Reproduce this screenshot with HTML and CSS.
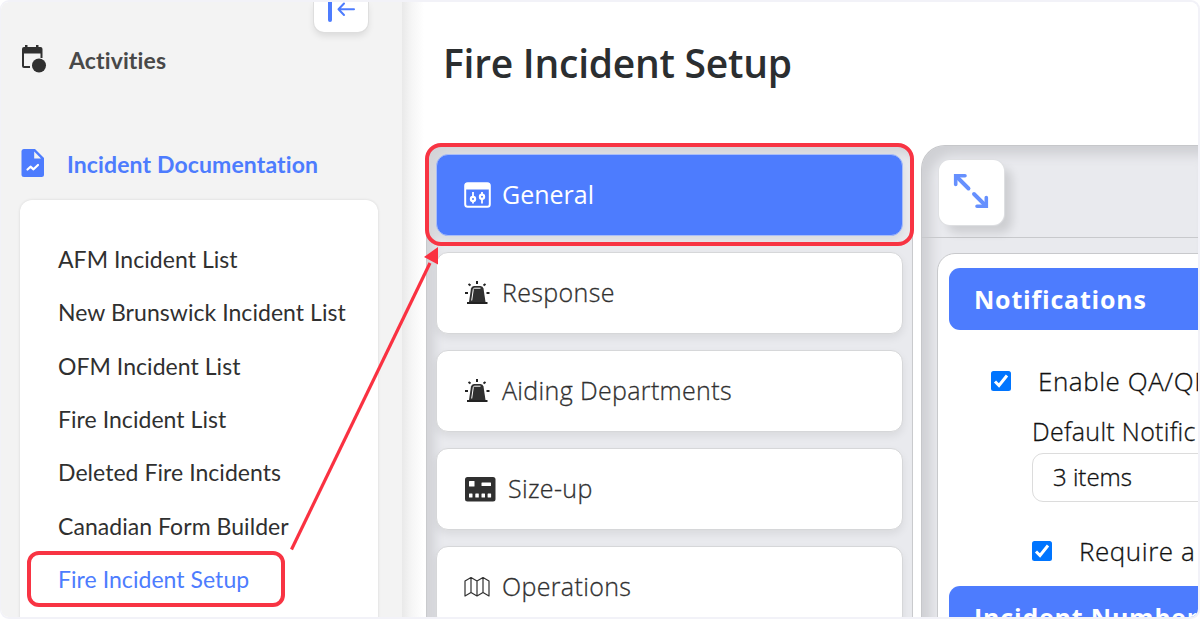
FILE: index.html
```html
<!DOCTYPE html>
<html lang="en">
<head>
    <meta charset="UTF-8">
    <meta name="viewport" content="width=device-width, initial-scale=1.0">
    <title>Fire Incident Setup</title>
    <link rel="stylesheet" href="styles.css">
</head>
<body>
    <div class="frame">
        <div class="app">
            <aside class="sidebar">
                <div class="sidebar-top">
                    <button class="collapse" aria-label="Collapse menu">
                        <svg width="30" height="24" viewBox="0 0 30 24" fill="none" stroke="#4d7cfe" stroke-linecap="round" stroke-linejoin="round">
                            <path d="M4 -4V18" stroke-width="4"/>
                            <path d="M28 7.300H13M18 1.500L12.500 7.300L18 13" stroke-width="2"/>
                        </svg>
                    </button>
                </div>

                <a class="nav nav-activities">
                    <svg width="26" height="30" viewBox="0 0 26 30">
                        <path d="M1 9V5Q1 3 3 3H4V1H6.500V3H15V1H17.500V3H19.500Q21.500 3 21.500 5V14H19.500V9.500H3V22H9V24H3Q1 24 1 22Z" fill="#303030"/>
                        <circle cx="18" cy="21.500" r="7" fill="#303030"/>
                    </svg>
                    <span>Activities</span>
                </a>

                <a class="nav nav-docs">
                    <svg width="24" height="30" viewBox="0 0 24 30">
                        <path d="M3 1H14L23 10V26.500Q23 29 20.500 29H3Q.5 29 .5 26.500V3.500Q.5 1 3 1Z" fill="#4d7cfe"/>
                        <path d="M13.200 3.500V10.500H20Z" fill="#f3f3f3"/>
                        <path d="M6.500 21.500L9.500 18.700L12.500 21.300L17 17" fill="none" stroke="#fff" stroke-width="2.200" stroke-linecap="round" stroke-linejoin="round"/>
                    </svg>
                    <span>Incident Documentation</span>
                </a>

                <nav class="submenu">
                    <a>AFM Incident List</a>
                    <a>New Brunswick Incident List</a>
                    <a>OFM Incident List</a>
                    <a>Fire Incident List</a>
                    <a>Deleted Fire Incidents</a>
                    <a>Canadian Form Builder</a>
                    <a class="current">Fire Incident Setup</a>
                </nav>
            </aside>

            <main class="main">
                <h1>Fire Incident Setup</h1>

                <div class="panels">
                    <div class="tabs">
                        <a class="tab active">
                            <svg width="27" height="26" viewBox="0 0 27 26">
                                <rect x="1.200" y="1.200" width="24.600" height="23.600" rx="2.500" fill="none" stroke="#fff" stroke-width="2"/>
                                <path d="M1 7.500V3Q1 1 3 1H24Q26 1 26 3V7.500Z" fill="#fff"/>
                                <path d="M9 10V21.500M18 10V21.500" stroke="#fff" stroke-width="1.800"/>
                                <circle cx="9" cy="17" r="2.100" fill="#4d7cfe" stroke="#fff" stroke-width="2.200"/>
                                <circle cx="18" cy="14.800" r="2.100" fill="#4d7cfe" stroke="#fff" stroke-width="2.200"/>
                            </svg>
                            <span>General</span>
                        </a>
                        <a class="tab">
                            <svg width="26" height="26" viewBox="0 0 26 26">
                                <path d="M3 23H23.500M13 1V4M1 13H4M22.500 13H25.500M4.500 4L6.500 5.500M21.500 4L19.500 5.500" stroke="#222" stroke-width="2"/>
                                <path d="M5 22L7 8.500Q7.500 6 10 6H16.500Q19 6 19.500 8.500L21.500 22Z" fill="#303030"/>
                                <path d="M7.700 20.500L9.300 9.300Q9.500 8.200 10.700 8.200H16.500" fill="none" stroke="#fff" stroke-width="1"/>
                            </svg>
                            <span>Response</span>
                        </a>
                        <a class="tab">
                            <svg width="26" height="26" viewBox="0 0 26 26">
                                <path d="M3 23H23.500M13 1V4M1 13H4M22.500 13H25.500M4.500 4L6.500 5.500M21.500 4L19.500 5.500" stroke="#222" stroke-width="2"/>
                                <path d="M5 22L7 8.500Q7.500 6 10 6H16.500Q19 6 19.500 8.500L21.500 22Z" fill="#303030"/>
                                <path d="M7.700 20.500L9.300 9.300Q9.500 8.200 10.700 8.200H16.500" fill="none" stroke="#fff" stroke-width="1"/>
                            </svg>
                            <span>Aiding Departments</span>
                        </a>
                        <a class="tab">
                            <svg width="32" height="26" viewBox="0 0 32 26">
                                <rect x="1" y="1" width="30.500" height="24.500" rx="2.500" fill="#303030"/>
                                <g fill="#fff">
                                    <rect x="5" y="5" width="5.500" height="5.500" rx=".5"/>
                                    <rect x="17.500" y="6.500" width="9.500" height="3.500" rx=".5"/>
                                    <rect x="5" y="17.500" width="3.500" height="4" rx=".5"/>
                                    <rect x="11.300" y="17.500" width="3.500" height="4" rx=".5"/>
                                    <rect x="17.500" y="17.500" width="3.500" height="4" rx=".5"/>
                                    <rect x="23.600" y="17.500" width="3.500" height="4" rx=".5"/>
                                </g>
                            </svg>
                            <span>Size-up</span>
                        </a>
                        <a class="tab">
                            <svg width="26" height="26" viewBox="0 0 26 26" fill="none" stroke="#303030" stroke-width="1.200" stroke-linejoin="round">
                                <path d="M1 7L7 3.500L13 7L19 3.500L25 7V22L19 18.500L13 22L7 18.500L1 22ZM7 3.500V18.500M13 7V22M19 3.500V18.500"/>
                            </svg>
                            <span>Operations</span>
                        </a>
                    </div>

                    <section class="detail">
                        <div class="detail-bar">
                            <button class="expand" aria-label="Expand">
                                <svg width="36" height="36" viewBox="0 0 36 36" fill="none" stroke="#6690fe" stroke-width="3.600" stroke-linecap="round">
                                    <path d="M2.700 11.500V2.700H12M33.300 24.500V33.300H24"/>
                                    <path d="M3.500 3.500L15.500 15.500M32.500 32.500L21 21" stroke-width="3.900"/>
                                    <path d="M1 1H7L1 7ZM35 35H29L35 29Z" fill="#6690fe" stroke="none"/>
                                </svg>
                            </button>
                        </div>
                        <div class="detail-body">
                            <h2>Notifications</h2>
                            <label class="check">
                                <svg width="20" height="20" viewBox="0 0 20 20"><rect width="20" height="20" rx="2.500" fill="#0075ff"/><path d="M4 10.500L8 14.500L16 4.500" fill="none" stroke="#fff" stroke-width="3"/></svg>
                                <span>Enable QA/QI</span>
                            </label>
                            <div class="field">
                                <label>Default Notific</label>
                                <div class="select">3 items</div>
                            </div>
                            <label class="check nested">
                                <svg width="20" height="20" viewBox="0 0 20 20"><rect width="20" height="20" rx="2.500" fill="#0075ff"/><path d="M4 10.500L8 14.500L16 4.500" fill="none" stroke="#fff" stroke-width="3"/></svg>
                                <span>Require a</span>
                            </label>
                            <h2>Incident Number</h2>
                        </div>
                    </section>
                </div>
            </main>
        </div>

        <!-- callouts over the page -->
        <div class="mark mark-menu"></div>
        <div class="mark mark-tab"></div>
        <svg class="arrow" width="170" height="320" viewBox="0 0 170 320">
            <path d="M11.500 309.500L150 23" stroke="#fa3141" stroke-width="3.200"/>
            <path d="M158 7V24.500L144 17Z" fill="#fa3141"/>
        </svg>
    </div>
</body>
</html>
```
FILE: styles.css
```css
* {
    box-sizing: border-box;
}
body {
    margin: 0;
    background: #fff;
    font-family: "Open Sans", "Noto Sans", sans-serif;
    color: #303030;
}
svg {
    display: block;
    flex: none;
}
button {
    border: none;
    padding: 0;
    background: #fff;
}

/* page frame */
.frame {
    position: relative;
    width: 1200px;
    height: 619px;
    padding: 2px 2px 2px 1px;
    background: #f2f2f8;
    border-radius: 9px;
    overflow: hidden;
}
.app {
    display: flex;
    height: 615px;
    overflow: hidden;
    background: #fff;
    border-radius: 8px;
}

/* sidebar */
.sidebar {
    flex: none;
    width: 401px;
    background: #f3f3f3;
    font-family: Lato, sans-serif;
}
.sidebar-top {
    display: flex;
    justify-content: flex-end;
    height: 30px;
    padding-right: 34px;
}
.collapse {
    width: 54px;
    height: 30px;
    padding-left: 12px;
    border-radius: 0 0 10px 10px;
    box-shadow: 0 0 0 1px #dedede, 0 4px 7px rgba(0, 0, 0, 0.1);
    overflow: hidden;
}
.collapse svg {
    margin-top: -6px;
}
.nav {
    display: flex;
    align-items: center;
    height: 60px;
    padding-left: 20px;
    font-size: 23px;
    font-weight: 700;
    letter-spacing: 0.12px;
}
.nav span {
    margin-top: 2px;
}
.nav-activities {
    gap: 22px;
    height: 54px;
    color: #484848;
}
.nav-docs {
    gap: 22px;
    margin-top: 47px;
    color: #4d7cfe;
}
.submenu {
    width: 358px;
    height: 440px;
    margin: 7px 0 0 19px;
    padding: 33px 0 0 38px;
    background: #fff;
    border-radius: 12px;
    box-shadow: 0 0 3px rgba(0, 0, 0, 0.12);
}
.submenu a {
    display: block;
    height: 53.33px;
    line-height: 53.33px;
    font-size: 23px;
    letter-spacing: 0.05px;
    white-space: nowrap;
}
.submenu .current {
    color: #4d7cfe;
}

/* main area */
.main {
    flex: 1;
    min-width: 0;
    background: linear-gradient(to right, #e9e9e9 0, #f6f6f6 10px, #fff 22px);
}
h1 {
    height: 143px;
    margin: 0;
    padding: 33px 0 0 41px;
    font-size: 39px;
    line-height: 56px;
    font-weight: 600;
    letter-spacing: -0.25px;
    color: #2b2e30;
}
.panels {
    display: flex;
    gap: 8px;
    padding-left: 24px;
}
.tabs {
    display: flex;
    flex: none;
    flex-direction: column;
    gap: 16px;
    width: 487px;
    height: 520px;
    padding: 8px 9px 0 9px;
    border: 1px solid #c9cacd;
    border-bottom: none;
    border-radius: 18px 18px 0 0;
    background: #e9eaee;
    box-shadow: inset 8px 8px 10px #d3d4d8;
}
.tab {
    display: flex;
    flex: none;
    align-items: center;
    gap: 12px;
    height: 82px;
    padding-left: 27px;
    border: 1px solid #d6d7d9;
    border-radius: 12px;
    background: #fff;
    box-shadow: 0 4px 8px rgba(0, 0, 0, 0.07);
    font-size: 25px;
    font-weight: 300;
    letter-spacing: 0.35px;
    -webkit-text-stroke: 0.3px;
}
.tab span {
    margin-top: -2px;
}
.tab.active {
    gap: 11px;
    border-color: #a9bdf8;
    background: #4d7cfe;
    color: #fff;
    font-weight: 400;
    letter-spacing: 0;
    -webkit-text-stroke: 0;
}
.detail {
    flex: 1;
    min-width: 0;
    height: 520px;
    border: 1px solid #c6c7ca;
    border-width: 1px 0 0 1px;
    border-radius: 24px 0 0 0;
    background: #e9eaee;
    box-shadow: inset 9px 9px 12px #cfd0d4;
}
.detail-bar {
    height: 92px;
    padding: 14px 0 0 17px;
    border-bottom: 1px solid #c8c9cc;
}
.expand {
    display: flex;
    align-items: center;
    justify-content: center;
    width: 65px;
    height: 65px;
    padding: 0 1px 3px 0;
    border-radius: 11px;
    box-shadow: 0 0 1px 1px #dfe0e3, 8px 8px 10px rgba(0, 0, 0, 0.12);
}
.detail-body {
    width: 600px;
    height: 500px;
    margin: 15px 0 0 15px;
    padding: 14px 0 0 11px;
    border: 1px solid #c8c9cc;
    border-radius: 18px;
    background: #fff;
    white-space: nowrap;
    color: #111;
}
h2 {
    height: 62px;
    margin: 0;
    padding-left: 25px;
    border-radius: 11px;
    background: #4d7cfe;
    color: #fff;
    font-size: 25px;
    line-height: 62px;
    font-weight: 700;
    letter-spacing: 0.8px;
}
.check {
    display: flex;
    align-items: center;
    gap: 27px;
    height: 50px;
    margin: 26px 0 0 42px;
    font-size: 26px;
    font-weight: 300;
    letter-spacing: 0.55px;
    -webkit-text-stroke: 0.3px;
}
.check span {
    margin-top: -1px;
}
.field {
    margin-left: 83px;
    font-weight: 300;
}
.field label {
    display: block;
    height: 47px;
    line-height: 50px;
    font-size: 25px;
    letter-spacing: 0.3px;
    -webkit-text-stroke: 0.3px;
}
.select {
    height: 49px;
    padding-left: 20px;
    border: 1px solid #dcdcdc;
    border-radius: 11px;
    line-height: 46px;
    font-size: 24px;
    font-weight: 300;
    -webkit-text-stroke: 0.35px;
}
.nested {
    margin: 24px 0 10px 83px;
}

/* red callouts */
.mark {
    position: absolute;
    border: 4px solid #f83443;
}
.mark-menu {
    left: 27px;
    top: 551px;
    width: 258px;
    height: 56px;
    border-radius: 12px;
}
.mark-tab {
    left: 425px;
    top: 143px;
    width: 489px;
    height: 103px;
    border-radius: 16px;
}
.arrow {
    position: absolute;
    left: 280px;
    top: 240px;
}
```
